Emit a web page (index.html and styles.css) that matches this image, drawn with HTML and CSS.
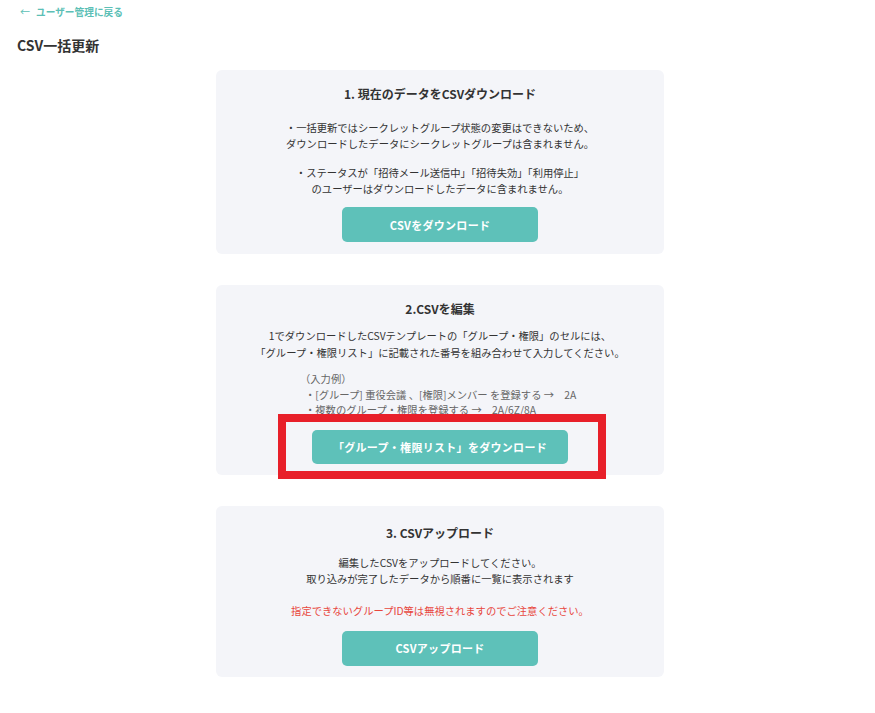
FILE: index.html
```html
<!DOCTYPE html>
<html lang="ja">
<head>
<meta charset="utf-8">
<title>CSV一括更新</title>
<link rel="stylesheet" href="styles.css">
</head>
<body>
<header class="page-head">
  <a class="back" href="#"><span class="back-arrow">←</span>ユーザー管理に戻る</a>
  <h1 class="page-title">CSV一括更新</h1>
</header>
<main class="main">
  <section class="card card-1">
    <h2 class="card-title">1. 現在のデータをCSVダウンロード</h2>
    <p class="text p1">・一括更新ではシークレットグループ状態の変更はできないため、<br>ダウンロードしたデータにシークレットグループは含まれません。</p>
    <p class="text p2">・ステータスが「招待メール送信中」「招待失効」「利用停止」<br>のユーザーはダウンロードしたデータに含まれません。</p>
    <button class="btn btn-narrow b1">CSVをダウンロード</button>
  </section>
  <section class="card card-2">
    <h2 class="card-title">2.CSVを編集</h2>
    <p class="text p3">1でダウンロードしたCSVテンプレートの「グループ・権限」のセルには、<br>「グループ・権限リスト」に記載された番号を組み合わせて入力してください。</p>
    <div class="example">
      <div class="ex-line ex-head">（入力例）</div>
      <div class="ex-line">・[グループ] 重役会議 、[権限]メンバー を登録する →　2A</div>
      <div class="ex-line">・複数のグループ・権限を登録する →　2A/6Z/8A</div>
    </div>
    <button class="btn btn-wide b2">「グループ・権限リスト」をダウンロード</button>
    <div class="highlight"></div>
  </section>
  <section class="card card-3">
    <h2 class="card-title">3. CSVアップロード</h2>
    <p class="text p4">編集したCSVをアップロードしてください。<br>取り込みが完了したデータから順番に一覧に表示されます</p>
    <p class="text warn">指定できないグループID等は無視されますのでご注意ください。</p>
    <button class="btn btn-narrow b3">CSVアップロード</button>
  </section>
</main>
</body>
</html>
```
FILE: styles.css
```css
* { box-sizing: border-box; }
html, body { margin: 0; padding: 0; background: #ffffff; }
body {
  font-family: "Noto Sans CJK JP", "Noto Sans", sans-serif;
  color: #333333;
  width: 875px;
  height: 713px;
  overflow: hidden;
}
.page-head {
  padding: 5px 0 0 17px;
  display: flex;
  flex-direction: column;
  align-items: flex-start;
}
.back {
  color: #5cbfb6;
  text-decoration: none;
  font-size: 9.7px;
  font-weight: 700;
  line-height: 14px;
  display: flex;
  align-items: center;
  gap: 6px;
  padding-left: 3px;
}
.back-arrow { font-weight: 400; font-size: 10px; }
.page-title {
  margin: 17px 0 0 0;
  font-size: 14px;
  font-weight: 700;
  line-height: 18px;
  color: #333333;
}
.main {
  display: flex;
  flex-direction: column;
  align-items: center;
  gap: 31px;
  padding-left: 5px;
  margin-top: 16px;
}
.card {
  width: 448px;
  background: #f4f5f9;
  border-radius: 6px;
  padding: 15px 20px 12px;
  display: flex;
  flex-direction: column;
  align-items: center;
  position: relative;
}
.card-title {
  margin: 0;
  font-size: 12px;
  font-weight: 700;
  line-height: 18px;
  color: #333333;
}
.text {
  margin: 0;
  font-size: 10.3px;
  line-height: 16px;
  text-align: center;
  color: #333333;
}
.p1 { margin-top: 17px; }
.p2 { margin-top: 13px; line-height: 15.5px; }
.b1 { margin-top: 11px; }
.card-2 { padding-bottom: 11px; }
.p3 { margin-top: 9px; line-height: 17px; }
.example {
  align-self: stretch;
  margin-top: 10px;
  padding-left: 69px;
  font-size: 10.3px;
  line-height: 15.5px;
  color: #666666;
}
.ex-head { margin-left: -5px; }
.b2 { margin-top: 12px; }
.p4 { margin-top: 13px; }
.warn { margin-top: 16px; color: #e8473d; }
.b3 { margin-top: 12px; }
.card-3 { padding-top: 18px; padding-bottom: 11px; }
.btn {
  border: none;
  border-radius: 5px;
  background: #5ec1b9;
  color: #ffffff;
  font-family: inherit;
  font-size: 11px;
  font-weight: 700;
  height: 34px;
  letter-spacing: 0.3px;
  cursor: pointer;
}
.btn-narrow { width: 196px; height: 35px; }
.btn-wide { width: 256px; }
.highlight {
  position: absolute;
  left: 62px;
  top: 129px;
  width: 328px;
  height: 65px;
  border: 8px solid #e8202a;
  pointer-events: none;
}
```
